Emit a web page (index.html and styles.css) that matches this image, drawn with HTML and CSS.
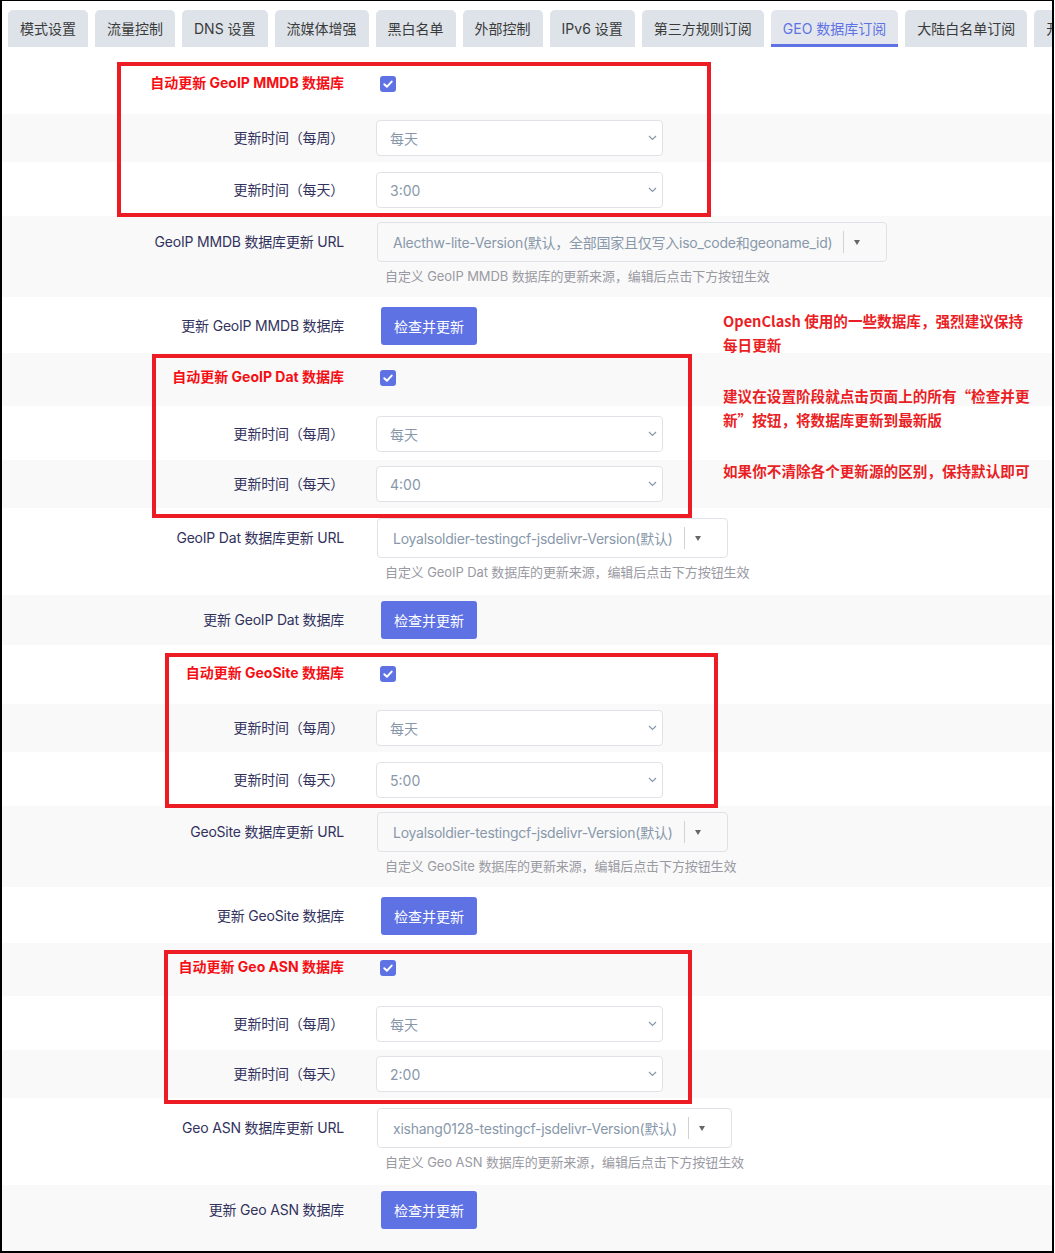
FILE: index.html
```html
<!DOCTYPE html>
<html lang="zh-CN">
<head>
<meta charset="utf-8">
<title>GEO 数据库订阅</title>
<link rel="stylesheet" href="styles.css">
</head>
<body>
<div class="frame">
  <div class="tabs">
    <div class="tab">模式设置</div>
    <div class="tab">流量控制</div>
    <div class="tab">DNS 设置</div>
    <div class="tab">流媒体增强</div>
    <div class="tab">黑白名单</div>
    <div class="tab">外部控制</div>
    <div class="tab">IPv6 设置</div>
    <div class="tab">第三方规则订阅</div>
    <div class="tab active">GEO 数据库订阅</div>
    <div class="tab">大陆白名单订阅</div>
    <div class="tab">开发者选项</div>
  </div>

  <div class="form">
    <!-- GeoIP MMDB -->
    <div class="row row-check">
      <div class="lbl lbl-red">自动更新 GeoIP MMDB 数据库</div>
      <div class="fld"><span class="cb"><svg width="16" height="16" viewBox="0 0 16 16"><rect width="16" height="16" rx="3" fill="#5e72e4"/><path d="M4.3 8.3 L6.9 10.7 L11.7 5.6" fill="none" stroke="#fff" stroke-width="2" stroke-linecap="round" stroke-linejoin="round"/></svg></span></div>
    </div>
    <div class="row row-select">
      <div class="lbl">更新时间（每周）</div>
      <div class="fld"><div class="sel"><span>每天</span><svg class="chev" width="9" height="6" viewBox="0 0 9 6"><polyline points="1,1 4.5,4.5 8,1" fill="none" stroke="#8898aa" stroke-width="1.2"/></svg></div></div>
    </div>
    <div class="row row-select">
      <div class="lbl">更新时间（每天）</div>
      <div class="fld"><div class="sel"><span>3:00</span><svg class="chev" width="9" height="6" viewBox="0 0 9 6"><polyline points="1,1 4.5,4.5 8,1" fill="none" stroke="#8898aa" stroke-width="1.2"/></svg></div></div>
    </div>
    <div class="row row-url">
      <div class="lbl">GeoIP MMDB 数据库更新 URL</div>
      <div class="fld">
        <div class="usel"><span class="utext">Alecthw-lite-Version(默认，全部国家且仅写入iso_code和geoname_id)</span><span class="udiv"></span><span class="caret"></span></div>
        <div class="help">自定义 GeoIP MMDB 数据库的更新来源，编辑后点击下方按钮生效</div>
      </div>
    </div>
    <div class="row row-btn">
      <div class="lbl">更新 GeoIP MMDB 数据库</div>
      <div class="fld"><button class="btn">检查并更新</button></div>
    </div>

    <!-- GeoIP Dat -->
    <div class="row row-check">
      <div class="lbl lbl-red">自动更新 GeoIP Dat 数据库</div>
      <div class="fld"><span class="cb"><svg width="16" height="16" viewBox="0 0 16 16"><rect width="16" height="16" rx="3" fill="#5e72e4"/><path d="M4.3 8.3 L6.9 10.7 L11.7 5.6" fill="none" stroke="#fff" stroke-width="2" stroke-linecap="round" stroke-linejoin="round"/></svg></span></div>
    </div>
    <div class="row row-select">
      <div class="lbl">更新时间（每周）</div>
      <div class="fld"><div class="sel"><span>每天</span><svg class="chev" width="9" height="6" viewBox="0 0 9 6"><polyline points="1,1 4.5,4.5 8,1" fill="none" stroke="#8898aa" stroke-width="1.2"/></svg></div></div>
    </div>
    <div class="row row-select">
      <div class="lbl">更新时间（每天）</div>
      <div class="fld"><div class="sel"><span>4:00</span><svg class="chev" width="9" height="6" viewBox="0 0 9 6"><polyline points="1,1 4.5,4.5 8,1" fill="none" stroke="#8898aa" stroke-width="1.2"/></svg></div></div>
    </div>
    <div class="row row-url">
      <div class="lbl">GeoIP Dat 数据库更新 URL</div>
      <div class="fld">
        <div class="usel"><span class="utext">Loyalsoldier-testingcf-jsdelivr-Version(默认)</span><span class="udiv"></span><span class="caret"></span></div>
        <div class="help">自定义 GeoIP Dat 数据库的更新来源，编辑后点击下方按钮生效</div>
      </div>
    </div>
    <div class="row row-btn">
      <div class="lbl">更新 GeoIP Dat 数据库</div>
      <div class="fld"><button class="btn">检查并更新</button></div>
    </div>

    <!-- GeoSite -->
    <div class="row row-check">
      <div class="lbl lbl-red">自动更新 GeoSite 数据库</div>
      <div class="fld"><span class="cb"><svg width="16" height="16" viewBox="0 0 16 16"><rect width="16" height="16" rx="3" fill="#5e72e4"/><path d="M4.3 8.3 L6.9 10.7 L11.7 5.6" fill="none" stroke="#fff" stroke-width="2" stroke-linecap="round" stroke-linejoin="round"/></svg></span></div>
    </div>
    <div class="row row-select">
      <div class="lbl">更新时间（每周）</div>
      <div class="fld"><div class="sel"><span>每天</span><svg class="chev" width="9" height="6" viewBox="0 0 9 6"><polyline points="1,1 4.5,4.5 8,1" fill="none" stroke="#8898aa" stroke-width="1.2"/></svg></div></div>
    </div>
    <div class="row row-select">
      <div class="lbl">更新时间（每天）</div>
      <div class="fld"><div class="sel"><span>5:00</span><svg class="chev" width="9" height="6" viewBox="0 0 9 6"><polyline points="1,1 4.5,4.5 8,1" fill="none" stroke="#8898aa" stroke-width="1.2"/></svg></div></div>
    </div>
    <div class="row row-url">
      <div class="lbl">GeoSite 数据库更新 URL</div>
      <div class="fld">
        <div class="usel"><span class="utext">Loyalsoldier-testingcf-jsdelivr-Version(默认)</span><span class="udiv"></span><span class="caret"></span></div>
        <div class="help">自定义 GeoSite 数据库的更新来源，编辑后点击下方按钮生效</div>
      </div>
    </div>
    <div class="row row-btn">
      <div class="lbl">更新 GeoSite 数据库</div>
      <div class="fld"><button class="btn">检查并更新</button></div>
    </div>

    <!-- Geo ASN -->
    <div class="row row-check">
      <div class="lbl lbl-red">自动更新 Geo ASN 数据库</div>
      <div class="fld"><span class="cb"><svg width="16" height="16" viewBox="0 0 16 16"><rect width="16" height="16" rx="3" fill="#5e72e4"/><path d="M4.3 8.3 L6.9 10.7 L11.7 5.6" fill="none" stroke="#fff" stroke-width="2" stroke-linecap="round" stroke-linejoin="round"/></svg></span></div>
    </div>
    <div class="row row-select">
      <div class="lbl">更新时间（每周）</div>
      <div class="fld"><div class="sel"><span>每天</span><svg class="chev" width="9" height="6" viewBox="0 0 9 6"><polyline points="1,1 4.5,4.5 8,1" fill="none" stroke="#8898aa" stroke-width="1.2"/></svg></div></div>
    </div>
    <div class="row row-select">
      <div class="lbl">更新时间（每天）</div>
      <div class="fld"><div class="sel"><span>2:00</span><svg class="chev" width="9" height="6" viewBox="0 0 9 6"><polyline points="1,1 4.5,4.5 8,1" fill="none" stroke="#8898aa" stroke-width="1.2"/></svg></div></div>
    </div>
    <div class="row row-url">
      <div class="lbl">Geo ASN 数据库更新 URL</div>
      <div class="fld">
        <div class="usel"><span class="utext">xishang0128-testingcf-jsdelivr-Version(默认)</span><span class="udiv"></span><span class="caret"></span></div>
        <div class="help">自定义 Geo ASN 数据库的更新来源，编辑后点击下方按钮生效</div>
      </div>
    </div>
    <div class="row row-btn">
      <div class="lbl">更新 Geo ASN 数据库</div>
      <div class="fld"><button class="btn">检查并更新</button></div>
    </div>
  </div>

  <div class="mark mark-1"></div>
  <div class="mark mark-2"></div>
  <div class="mark mark-3"></div>
  <div class="mark mark-4"></div>

  <div class="note">
    <p>OpenClash 使用的一些数据库，强烈建议保持<br>每日更新</p>
    <p>建议在设置阶段就点击页面上的所有“检查并更<br>新”按钮，将数据库更新到最新版</p>
    <p>如果你不清除各个更新源的区别，保持默认即可</p>
  </div>
</div>
</body>
</html>
```

FILE: styles.css
```css
html, body {
  margin: 0;
  padding: 0;
  background: #fff;
}

body {
  font-family: Inter, "Noto Sans CJK SC", sans-serif;
  font-size: 14px;
  color: #32325d;
}

.frame {
  position: relative;
  width: 1054px;
  height: 1253px;
  box-sizing: border-box;
  border-top: 1px solid #000;
  border-left: 2px solid #000;
  border-right: 2px solid #000;
  border-bottom: 2px solid #000;
  overflow: hidden;
  display: flex;
  flex-direction: column;
}

/* Tabs */
.tabs {
  display: flex;
  gap: 7px;
  padding: 9px 0 0 6px;
  white-space: nowrap;
  flex-shrink: 0;
}

.tab {
  flex-shrink: 0;
  height: 37px;
  line-height: 37px;
  padding: 0 12px;
  background: #dde3e9;
  border-radius: 5px 5px 0 0;
  color: #3b3b3b;
  font-size: 14px;
  box-sizing: border-box;
}

.tab.active {
  background: #e3e7ed;
  color: #5e72e4;
  box-shadow: inset 0 -3px 0 #5e72e4;
}

/* Form rows */
.form {
  flex: 1;
  display: flex;
  flex-direction: column;
  padding-top: 8px;
}

.row {
  display: grid;
  grid-template-columns: 342px 1fr;
  column-gap: 32px;
  align-items: start;
  padding: 10px 0 8px;
  background: #fff;
}

.row:nth-child(even) {
  background: #f9f9f9;
  padding: 6px 0 6px;
}

.row:last-child {
  flex: 1;
}

.lbl {
  text-align: right;
  white-space: nowrap;
  color: #32325d;
  line-height: 36px;
  letter-spacing: -0.2px;
}

.lbl-red {
  color: #f50f14;
  font-weight: 700;
  letter-spacing: 0;
}

.row-url .lbl {
  line-height: 40px;
}

.row-btn .lbl {
  line-height: 38px;
}

.row-check .fld {
  height: 41px;
}

.cb {
  display: block;
  width: 16px;
  height: 16px;
  margin: 11px 0 0 4px;
}

.cb svg {
  display: block;
}

/* Select */
.sel {
  width: 287px;
  height: 36px;
  box-sizing: border-box;
  border: 1px solid #dfe3e8;
  border-radius: 4px;
  background: #fff;
  display: flex;
  align-items: center;
  justify-content: space-between;
  padding: 0 5px 0 13px;
  color: #8898aa;
}

.chev {
  display: block;
}

/* URL select */
.row-url .fld {
  padding-bottom: 5px;
}

.usel {
  display: inline-flex;
  align-items: center;
  height: 40px;
  box-sizing: border-box;
  margin-left: 1px;
  border: 1px solid #dfe3e8;
  border-radius: 4px;
  padding: 0 0 0 15px;
  color: #8898aa;
  white-space: nowrap;
  letter-spacing: -0.25px;
}

.udiv {
  width: 1px;
  height: 22px;
  background: #cfd3d8;
  margin-left: 11px;
}

.caret {
  width: 0;
  height: 0;
  border-left: 3.5px solid transparent;
  border-right: 3.5px solid transparent;
  border-top: 5px solid #666;
  margin: 1px 26px 0 10px;
}

.help {
  margin: 4px 0 0 9px;
  line-height: 20px;
  font-size: 13px;
  color: #9a9aa3;
  white-space: nowrap;
  letter-spacing: -0.1px;
}

/* Button */
.btn {
  display: block;
  margin-left: 5px;
  height: 38px;
  padding: 0 13px;
  border: 0;
  border-radius: 3px;
  background: #5e72e4;
  color: #fff;
  font-family: Inter, "Noto Sans CJK SC", sans-serif;
  font-size: 14px;
}

/* Red annotation boxes */
.mark {
  position: absolute;
  box-sizing: border-box;
  border: 4px solid #ed1c24;
  pointer-events: none;
}

.mark-1 { left: 115px; top: 61px; width: 594px; height: 155px; }
.mark-2 { left: 150px; top: 353px; width: 540px; height: 164px; }
.mark-3 { left: 163px; top: 652px; width: 553px; height: 155px; }
.mark-4 { left: 162px; top: 949px; width: 528px; height: 154px; }

.note {
  position: absolute;
  left: 721px;
  top: 308px;
  color: #ea1f26;
  font-family: "Noto Sans CJK SC", sans-serif;
  font-weight: 700;
  font-size: 14.6px;
  line-height: 24px;
  white-space: nowrap;
}

.note p {
  margin: 0 0 27px;
}
```
